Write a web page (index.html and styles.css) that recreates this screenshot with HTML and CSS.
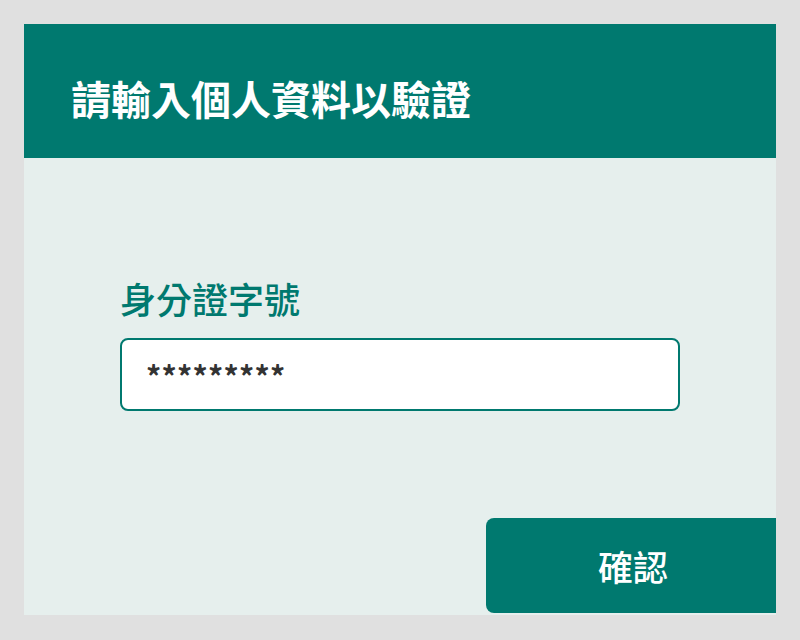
FILE: index.html
```html
<!DOCTYPE html>
<html lang="zh-Hant">
<head>
  <meta charset="UTF-8">
  <title>驗證</title>
  <link rel="stylesheet" href="styles.css">
</head>
<body>
  <div class="card">
    <header class="card-header">請輸入個人資料以驗證</header>
    <main class="card-body">
      <label class="field-label" for="idNumber">身分證字號</label>
      <div class="field-input" id="idNumber">*********</div>
      <button class="confirm-btn" type="button">確認</button>
    </main>
  </div>
</body>
</html>
```

FILE: styles.css
```css
* { margin: 0; padding: 0; box-sizing: border-box; }
body {
  background-color: #e0e0e0;
  padding: 24px;
  font-family: "Noto Sans CJK TC", "Noto Sans", sans-serif;
}
/* 卡片 */
.card {
  width: 752px;
  height: 591px;
  background-color: #e6efed;
  display: flex;
  flex-direction: column;
}
.card-header {
  height: 134px;
  background-color: #00796f;
  color: #fff;
  font-size: 40px;
  font-weight: 700;
  padding: 14px 0 0 47px;
  display: flex;
  align-items: center;
}
.card-body {
  flex: 1;
  display: flex;
  flex-direction: column;
  padding: 0 0 2px 96px;
}
.field-label {
  margin-top: 119px;
  color: #00796f;
  font-size: 36px;
  font-weight: 500;
  line-height: 42px;
}
.field-input {
  margin-top: 19px;
  width: 560px;
  height: 73px;
  background-color: #fff;
  border: 2px solid #00796f;
  border-radius: 8px;
  padding: 0 0 0 24px;
  display: flex;
  align-items: center;
  font-size: 30px;
  font-weight: 700;
  letter-spacing: 0.3px;
  color: #333;
}
.confirm-btn {
  margin-top: auto;
  align-self: flex-end;
  width: 290px;
  height: 95px;
  border: none;
  border-radius: 8px 0 0 8px;
  background-color: #00796f;
  color: #fff;
  font-family: inherit;
  font-size: 35px;
  font-weight: 500;
  padding-left: 4px;
  cursor: pointer;
}
```
